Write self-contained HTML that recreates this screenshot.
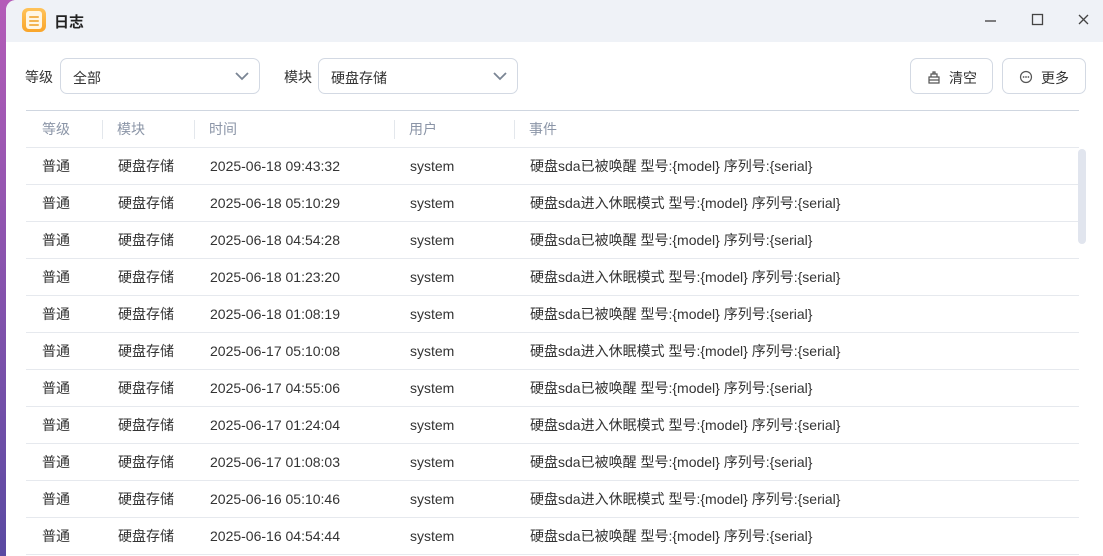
<!DOCTYPE html>
<html><head><meta charset="utf-8"><style>
*{box-sizing:border-box;margin:0;padding:0}
body{width:1103px;height:556px;overflow:hidden;background:linear-gradient(180deg,#b45cb8,#5a4aa2);font-family:"Liberation Sans","Noto Sans CJK SC",sans-serif;color:#333;font-size:14px;position:relative}
.win{position:absolute;left:6px;top:0;width:1097px;height:556px;background:#fff;border-top-left-radius:10px;overflow:hidden}
.tb{height:42px;background:#eff2f7;position:relative}
.tb .t{position:absolute;left:48px;top:11px;font-size:15px;font-weight:bold;color:#222}
.icon{position:absolute;left:16px;top:8px;width:24px;height:24px;border-radius:6px;background:linear-gradient(#ffc35a,#f9a52a);}
.icon i{position:absolute;left:4px;top:3px;width:16px;height:18px;border-radius:3px;background:#fff6e4}
.icon b{position:absolute;left:7px;height:2px;width:10px;background:#f3b451;border-radius:1px}
.sel{position:absolute;top:58px;height:36px;border:1px solid #d3d9e3;border-radius:7px;padding:9px 12px;font-size:14px}
.sel svg{position:absolute;right:10px;top:12px}
.lbl{position:absolute;top:67px;font-size:14px}
.btn{position:absolute;top:58px;height:36px;border:1px solid #d3d9e3;border-radius:7px;font-size:14px;padding:9px 0 0 0}
table{position:absolute;left:20px;top:110px;width:1053px;border-collapse:collapse;border-top:1px solid #cfd6e0}
td,th{height:37px;border-bottom:1px solid #e6e9ee;text-align:left;font-weight:normal;padding:0;font-size:14px}
th{color:#8b95a7;position:relative}
th.s::before{content:"";position:absolute;left:0;top:9px;height:19px;border-left:1px solid #e3e7ec}
.sb{position:absolute;left:1072px;top:149px;width:8px;height:95px;border-radius:4px;background:#e1e5ee}
</style></head><body><div class="win">
<div class="tb"><div class="icon"><i></i><b style="top:8px"></b><b style="top:12px"></b><b style="top:16px"></b></div><div class="t">日志</div>
<svg style="position:absolute;left:978px;top:14px" width="14" height="14"><line x1="1" y1="7" x2="12" y2="7" stroke="#555" stroke-width="1.5"/></svg>
<svg style="position:absolute;left:1025px;top:13px" width="14" height="14"><rect x="1.5" y="1.5" width="10" height="10" fill="none" stroke="#444" stroke-width="1.3"/></svg>
<svg style="position:absolute;left:1071px;top:13px" width="14" height="14"><path d="M2 2L11 11M11 2L2 11" stroke="#444" stroke-width="1.3"/></svg>
</div>
<div class="lbl" style="left:19px">等级</div>
<div class="sel" style="left:54px;width:200px">全部<svg width="14" height="10"><path d="M1 2L7 8L13 2" fill="none" stroke="#7a8594" stroke-width="1.8"/></svg></div>
<div class="lbl" style="left:278px">模块</div>
<div class="sel" style="left:312px;width:200px">硬盘存储<svg width="14" height="10"><path d="M1 2L7 8L13 2" fill="none" stroke="#7a8594" stroke-width="1.8"/></svg></div>
<div class="btn" style="left:904px;width:83px"><svg style="position:absolute;left:16px;top:11px" width="14" height="14"><path d="M2 7H12V13H2Z M4 7V4H10V7 M6 4V2H8V4 M2 10H12" fill="none" stroke="#555" stroke-width="1.2"/></svg><span style="position:absolute;left:38px">清空</span></div>
<div class="btn" style="left:996px;width:84px"><svg style="position:absolute;left:16px;top:11px" width="14" height="14"><circle cx="7" cy="7" r="5.5" fill="none" stroke="#555" stroke-width="1.2"/><circle cx="4.6" cy="7" r=".9" fill="#555"/><circle cx="7" cy="7" r=".9" fill="#555"/><circle cx="9.4" cy="7" r=".9" fill="#555"/></svg><span style="position:absolute;left:38px">更多</span></div>
<table>
<colgroup><col style="width:76px"><col style="width:92px"><col style="width:200px"><col style="width:120px"><col></colgroup>
<tr><th style="padding-left:16px">等级</th><th class="s" style="padding-left:15px">模块</th><th class="s" style="padding-left:15px">时间</th><th class="s" style="padding-left:15px">用户</th><th class="s" style="padding-left:15px">事件</th></tr>
<tbody id="b">
<tr><td style="padding-left:16px">普通</td><td style="padding-left:16px">硬盘存储</td><td style="padding-left:16px">2025-06-18 09:43:32</td><td style="padding-left:16px">system</td><td style="padding-left:16px">硬盘sda已被唤醒 型号:{model} 序列号:{serial}</td></tr>
<tr><td style="padding-left:16px">普通</td><td style="padding-left:16px">硬盘存储</td><td style="padding-left:16px">2025-06-18 05:10:29</td><td style="padding-left:16px">system</td><td style="padding-left:16px">硬盘sda进入休眠模式 型号:{model} 序列号:{serial}</td></tr>
<tr><td style="padding-left:16px">普通</td><td style="padding-left:16px">硬盘存储</td><td style="padding-left:16px">2025-06-18 04:54:28</td><td style="padding-left:16px">system</td><td style="padding-left:16px">硬盘sda已被唤醒 型号:{model} 序列号:{serial}</td></tr>
<tr><td style="padding-left:16px">普通</td><td style="padding-left:16px">硬盘存储</td><td style="padding-left:16px">2025-06-18 01:23:20</td><td style="padding-left:16px">system</td><td style="padding-left:16px">硬盘sda进入休眠模式 型号:{model} 序列号:{serial}</td></tr>
<tr><td style="padding-left:16px">普通</td><td style="padding-left:16px">硬盘存储</td><td style="padding-left:16px">2025-06-18 01:08:19</td><td style="padding-left:16px">system</td><td style="padding-left:16px">硬盘sda已被唤醒 型号:{model} 序列号:{serial}</td></tr>
<tr><td style="padding-left:16px">普通</td><td style="padding-left:16px">硬盘存储</td><td style="padding-left:16px">2025-06-17 05:10:08</td><td style="padding-left:16px">system</td><td style="padding-left:16px">硬盘sda进入休眠模式 型号:{model} 序列号:{serial}</td></tr>
<tr><td style="padding-left:16px">普通</td><td style="padding-left:16px">硬盘存储</td><td style="padding-left:16px">2025-06-17 04:55:06</td><td style="padding-left:16px">system</td><td style="padding-left:16px">硬盘sda已被唤醒 型号:{model} 序列号:{serial}</td></tr>
<tr><td style="padding-left:16px">普通</td><td style="padding-left:16px">硬盘存储</td><td style="padding-left:16px">2025-06-17 01:24:04</td><td style="padding-left:16px">system</td><td style="padding-left:16px">硬盘sda进入休眠模式 型号:{model} 序列号:{serial}</td></tr>
<tr><td style="padding-left:16px">普通</td><td style="padding-left:16px">硬盘存储</td><td style="padding-left:16px">2025-06-17 01:08:03</td><td style="padding-left:16px">system</td><td style="padding-left:16px">硬盘sda已被唤醒 型号:{model} 序列号:{serial}</td></tr>
<tr><td style="padding-left:16px">普通</td><td style="padding-left:16px">硬盘存储</td><td style="padding-left:16px">2025-06-16 05:10:46</td><td style="padding-left:16px">system</td><td style="padding-left:16px">硬盘sda进入休眠模式 型号:{model} 序列号:{serial}</td></tr>
<tr><td style="padding-left:16px">普通</td><td style="padding-left:16px">硬盘存储</td><td style="padding-left:16px">2025-06-16 04:54:44</td><td style="padding-left:16px">system</td><td style="padding-left:16px">硬盘sda已被唤醒 型号:{model} 序列号:{serial}</td></tr>
</tbody></table>
<div class="sb"></div>
</div></body></html>
